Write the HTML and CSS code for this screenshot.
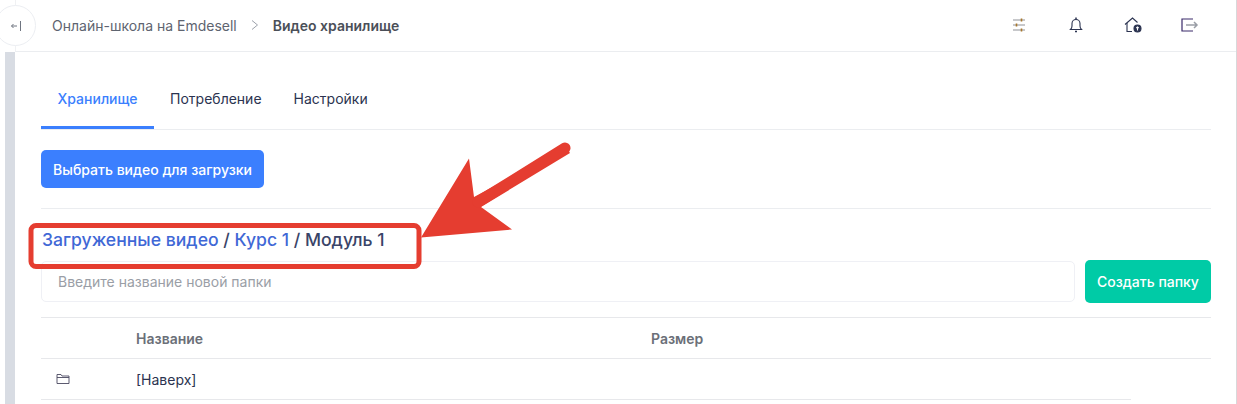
FILE: index.html
```html
<!DOCTYPE html>
<html lang="ru">
<head>
  <meta charset="UTF-8" />
  <title>Видео хранилище</title>
  <link rel="stylesheet" href="styles.css">
</head>
<body>

<div class="page">
  <header class="topbar">
    <div class="crumbs">
      <span class="crumb">Онлайн-школа на Emdesell</span>
      <svg class="crumb-sep" width="10" height="12" viewBox="0 0 10 12"><path d="M2 1.500 7.500 6 2 10.500"/></svg>
      <span class="crumb-current">Видео хранилище</span>
    </div>
    <div class="top-icons">
      <span class="top-icon">
        <svg width="14" height="14" viewBox="0 0 14 14" fill="none" stroke-width="1.200">
          <path stroke="#8f9298" d="M1 2h12M1 7h12M1 12h12"/>
          <path stroke="#a8772c" stroke-width="1.600" d="M9.500.5v3M4.500 5.500v3M9.500 10.500v3"/>
        </svg>
      </span>
      <span class="top-icon">
        <svg width="14" height="16" viewBox="0 0 14 16" fill="none" stroke="#2b3350" stroke-width="1.100">
          <path d="M1.500 12.500h11c-1-1-1.500-2-1.500-3.500V6.500a4 4 0 0 0-8 0V9c0 1.500-.5 2.500-1.500 3.500z"/>
          <path stroke-width="1.500" d="M6 14.500h2M7 .5v1.500"/>
        </svg>
      </span>
      <span class="top-icon">
        <svg width="18" height="16" viewBox="0 0 18 16" fill="none" stroke="#2b3350" stroke-width="1.100">
          <path d="M1 7.500 8.500 1l5 4.500"/>
          <path d="M3 6v8.500h5"/>
          <circle cx="13.500" cy="11.500" r="3.500" fill="#2b3350"/>
          <path stroke="#fff" d="M13.500 13.500v-3.500M12.300 11l1.200-1 1.200 1"/>
        </svg>
      </span>
      <span class="top-icon">
        <svg width="18" height="14" viewBox="0 0 18 14" fill="none" stroke-width="1.200">
          <path stroke="#3a2a6a" d="M12 1H1v12h11"/>
          <path stroke="#9a9ea6" stroke-width="1.500" d="M5 7h11M13 4l3 3-3 3"/>
        </svg>
      </span>
    </div>
  </header>

  <div class="toggle">
    <svg width="12" height="12" viewBox="0 0 12 12" fill="none" stroke="#6f7580"><path d="M7 6H1.500M3.500 4l-2 2 2 2"/><path d="M10.500 1v10"/></svg>
  </div>

  <div class="layout">
    <div class="strip"></div>
    <main class="content">
      <nav class="tabs">
        <a class="tab tab-active">Хранилище</a>
        <a class="tab">Потребление</a>
        <a class="tab">Настройки</a>
      </nav>

      <div class="upload-row">
        <button class="btn btn-blue">Выбрать видео для загрузки</button>
      </div>

      <h2 class="path"><a>Загруженные видео</a> / <a>Курс 1</a> / Модуль 1</h2>

      <div class="folder-row">
        <input class="folder-input" type="text" placeholder="Введите название новой папки">
        <button class="btn btn-green">Создать папку</button>
      </div>

      <div class="row row-head">
        <span></span>
        <span>Название</span>
        <span>Размер</span>
      </div>
      <div class="row row-item">
        <svg width="14" height="12" viewBox="0 0 14 12" fill="none" stroke="#4a4860" stroke-width=".9"><path d="M1 10.500V1.500h4l1 1.500h7v7.500zM1 4.500h12"/></svg>
        <span>[Наверх]</span>
        <span></span>
      </div>
    </main>
  </div>

  <!-- annotation on top of the screenshot -->
  <svg class="markup" width="1237" height="404" viewBox="0 0 1237 404">
    <rect x="31" y="225.500" width="388" height="41" rx="5" fill="none" stroke="#e53d30" stroke-width="5"/>
    <path d="M421 237.500 469 158.500 474 197 566 147 570 153 481 207 512 229.500z" fill="#e53d30"/>
    <path d="M478 202 565 148" stroke="#e53d30" stroke-width="11" stroke-linecap="round"/>
  </svg>
</div>

</body>
</html>
```

FILE: styles.css
```css
* {
  box-sizing: border-box;
}

body {
  margin: 0;
  background: #fff;
  font-family: 'Inter', sans-serif;
  font-size: 14px;
  color: #2b3350;
}

.page {
  position: relative;
  width: 1237px;
  height: 404px;
  overflow: hidden;
  border-right: 1px solid #d8d8da;
}

.topbar {
  display: flex;
  align-items: center;
  justify-content: space-between;
  height: 52px;
  margin-left: 15px;
  padding: 0 36px 1px 36px;
  border-left: 1px solid #f0f1f3;
  border-bottom: 1px solid #ebedf0;
}

.crumbs {
  display: flex;
  align-items: center;
  font-size: 14px;
  color: #5e6470;
}

.crumb-sep {
  margin: 0 13px;
  fill: none;
  stroke: #9da2ab;
}

.crumb-current {
  font-weight: 600;
  color: #4b4f58;
}

.top-icons {
  display: flex;
  gap: 37px;
}

.top-icon {
  display: flex;
  align-items: center;
  justify-content: center;
  width: 20px;
  height: 20px;
}

.toggle {
  position: absolute;
  left: -5px;
  top: 5px;
  display: flex;
  align-items: center;
  justify-content: center;
  width: 41px;
  height: 41px;
  background: #fff;
  border: 1px solid #eceef2;
  border-radius: 50%;
}

.layout {
  display: flex;
}

.strip {
  width: 10px;
  height: 352px;
  margin-left: 5px;
  background: #d8dce3;
}

.content {
  flex: 1;
  padding: 0 25px 0 26px;
}

.tabs {
  display: flex;
  height: 78px;
  align-items: flex-end;
  border-bottom: 1px solid #ebedf0;
}

.tab {
  padding: 0 16px;
  height: 48px;
  line-height: 36px;
  font-size: 14px;
  color: #2b3350;
}

.tab-active {
  padding: 0 16.500px;
  color: #3b7ffe;
  font-weight: 500;
  border-bottom: 3px solid #3b7ffe;
}

.upload-row {
  padding: 20px 0;
  border-bottom: 1px solid #ebedf0;
}

.btn {
  height: 38px;
  padding: 0;
  border: none;
  border-radius: 5px;
  font-family: inherit;
  font-size: 14px;
  font-weight: 450;
  white-space: nowrap;
  color: #fff;
}

.btn-blue {
  width: 223px;
  background: #3b7ffe;
}

.btn-green {
  flex: none;
  width: 126px;
  height: 43px;
  background: #00cba6;
}

.path {
  margin: 20px 0 0;
  height: 31px;
  padding-left: 1px;
  line-height: 22px;
  font-size: 17.600px;
  font-weight: 500;
  color: #3a4468;
}

.path a {
  color: #3f68d6;
}

.folder-row {
  display: flex;
  align-items: center;
  gap: 10px;
  padding-bottom: 14px;
  border-bottom: 1px solid #e7e8eb;
}

.folder-input {
  flex: 1;
  height: 41px;
  padding: 0 16px;
  border: 1px solid #eff0f5;
  border-radius: 5px;
  font-family: inherit;
  font-size: 14px;
}

.folder-input::placeholder {
  color: #9a9ea6;
}

.row {
  display: grid;
  grid-template-columns: 95px 515px 1fr;
  align-items: center;
  height: 41px;
  border-bottom: 1px solid #e7e8eb;
}

.row-head {
  font-weight: 600;
  color: #6b6f78;
}

.row-item {
  width: 1090px;
}

.row-item svg {
  margin-left: 15px;
}

.markup {
  position: absolute;
  left: 0;
  top: 0;
}
```
